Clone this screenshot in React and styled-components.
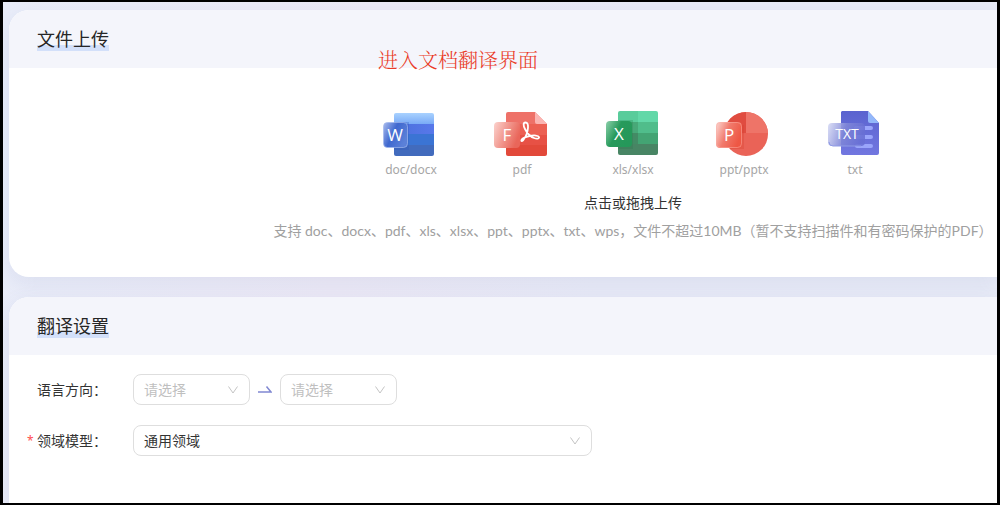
import React, { useState } from "react";
import styled, { createGlobalStyle } from "styled-components";

const FILE_TYPES = [
  { id: "doc", label: "doc/docx" },
  { id: "pdf", label: "pdf" },
  { id: "xls", label: "xls/xlsx" },
  { id: "ppt", label: "ppt/pptx" },
  { id: "txt", label: "txt" },
];

const LANGUAGES = ["中文", "英语", "日语"];
const DOMAINS = ["通用领域", "法律领域", "医学领域"];

const Gradient = ({ id, stops, x2 = "0", y2 = "1" }) => (
  <linearGradient id={id} x1="0" y1="0" x2={x2} y2={y2}>
    {stops.map((color, i) => (
      <stop key={color} offset={i / (stops.length - 1)} stopColor={color} />
    ))}
  </linearGradient>
);

const DocIcon = () => (
  <Icon viewBox="0 0 56 48" aria-hidden="true">
    <defs>
      <Gradient id="docTop" stops={["#a9d2ff", "#79aaf6"]} />
      <Gradient id="docMid" x2="1" y2="0" stops={["#4a6fdb", "#5878ea"]} />
      <Gradient id="docBadge" x2="1" y2="0.5" stops={["#a9bbed", "#3f68cf", "#5b80d8"]} />
      <clipPath id="docClip">
        <rect x="11" y="3" width="40" height="43" rx="2" />
      </clipPath>
    </defs>
    <g clipPath="url(#docClip)">
      <rect x="11" y="3" width="40" height="11" fill="url(#docTop)" />
      <rect x="11" y="14" width="40" height="10" fill="url(#docMid)" />
      <rect x="11" y="24" width="40" height="11" fill="#3b74d4" />
      <rect x="11" y="35" width="40" height="11" fill="#426bbd" />
      <rect x="11" y="12" width="15" height="28" fill="#2e55b8" opacity="0.3" />
    </g>
    <rect x="0.5" y="12.5" width="24" height="25" rx="4" fill="url(#docBadge)" stroke="#9fb6ec" strokeOpacity="0.7" />
    <Letter x="12" y="31">W</Letter>
  </Icon>
);

const PdfIcon = () => (
  <Icon viewBox="0 0 56 48" aria-hidden="true">
    <defs>
      <Gradient id="pdfBadge" x2="1" y2="0.4" stops={["#fbd3ce", "#f29a91", "#e9665a"]} />
      <clipPath id="pdfClip">
        <path d="M14 2h27l12 12v30a2 2 0 0 1-2 2H14a2 2 0 0 1-2-2V4a2 2 0 0 1 2-2z" />
      </clipPath>
    </defs>
    <g clipPath="url(#pdfClip)">
      <rect x="12" y="2" width="41" height="12" fill="#ee7168" />
      <rect x="12" y="14" width="41" height="11" fill="#ec6053" />
      <rect x="12" y="25" width="41" height="10" fill="#e75145" />
      <rect x="12" y="35" width="41" height="11" fill="#e2493a" />
    </g>
    <path d="M41 2l12 12H43a2 2 0 0 1-2-2z" fill="#fbb5b2" />
    <rect x="0" y="12" width="26" height="26" rx="4" fill="url(#pdfBadge)" />
    <Letter x="13" y="31">F</Letter>
    <path
      d="M31.500 12.500c-2.600 0-2.200 3.500-.500 6.500 2 4 5 7.500 9 9 3 1.200 5.500.500 5-1-.500-1.500-5-2-9.500-1-3.500.800-7 2.200-8 4-.700 1.500 1 1.300 2-.200 2.500-3.500 4.200-7.500 4.500-12 .200-3.300-.500-5.300-2.500-5.300z"
      fill="none"
      stroke="#fff"
      strokeWidth="1.800"
      strokeLinejoin="round"
    />
  </Icon>
);

const XlsIcon = () => (
  <Icon viewBox="0 0 56 48" aria-hidden="true">
    <defs>
      <Gradient id="xlsBadge" x2="1" y2="0.5" stops={["#8ccfaa", "#279a5b", "#25985a"]} />
      <clipPath id="xlsClip">
        <rect x="13" y="1" width="40" height="44" rx="2" />
      </clipPath>
    </defs>
    <g clipPath="url(#xlsClip)">
      <rect x="13" y="1" width="20" height="11" fill="#59cc9b" />
      <rect x="33" y="1" width="20" height="11" fill="#62d8a8" />
      <rect x="13" y="12" width="20" height="11" fill="#48a878" />
      <rect x="33" y="12" width="20" height="11" fill="#50bd8b" />
      <rect x="13" y="23" width="20" height="11" fill="#438b65" />
      <rect x="33" y="23" width="20" height="11" fill="#43a473" />
      <rect x="13" y="34" width="40" height="11" fill="#488564" />
      <rect x="13" y="10" width="15" height="29" fill="#227848" opacity="0.25" />
    </g>
    <rect x="1" y="11" width="26" height="26" rx="4" fill="url(#xlsBadge)" />
    <Letter x="14" y="30">X</Letter>
  </Icon>
);

const PptIcon = () => (
  <Icon viewBox="0 0 56 48" aria-hidden="true">
    <defs>
      <Gradient id="pptBadge" x2="1" y2="0.4" stops={["#fcd8d4", "#f17a6c", "#ee5744"]} />
    </defs>
    <circle cx="30" cy="24" r="22" fill="#ea6357" />
    <path d="M30 2a22 22 0 0 0-22 22l22-1z" fill="#e04c40" />
    <path d="M30 2a22 22 0 0 1 22 21H30z" fill="#ee7468" />
    <path d="M10 15h18v24H14a22 22 0 0 1-4-24z" fill="#d8402f" opacity="0.3" />
    <rect x="0" y="12" width="26" height="26" rx="4" fill="url(#pptBadge)" />
    <rect x="0.5" y="12.5" width="25" height="25" rx="4" fill="none" stroke="#fbb0a6" strokeOpacity="0.5" />
    <Letter x="13" y="31">P</Letter>
  </Icon>
);

const TxtIcon = () => (
  <Icon viewBox="0 0 56 48" aria-hidden="true">
    <defs>
      <Gradient id="txtPage" stops={["#5a63cf", "#7277e0"]} />
      <Gradient id="txtBadge" x2="1" y2="0.2" stops={["#d6daf4", "#8087d8", "#686fd4"]} />
    </defs>
    <path d="M15 1h26l11 12v30a2 2 0 0 1-2 2H16a2 2 0 0 1-2-2V2z" fill="url(#txtPage)" />
    <path d="M41 1l11 12h-9a2 2 0 0 1-2-2z" fill="#93b8fa" />
    <path d="M29 18h15M29 27h15M30 36h14" stroke="#9aa5fb" strokeWidth="4" strokeLinecap="round" />
    <rect x="1" y="13" width="37" height="23" rx="4" fill="url(#txtBadge)" fillOpacity="0.88" />
    <path d="M2 32a4 4 0 0 0 4 4h28" fill="none" stroke="#8f9be6" strokeWidth="1" />
    <Letter x="20" y="29" $size={14}>TXT</Letter>
  </Icon>
);

const ICONS = { doc: DocIcon, pdf: PdfIcon, xls: XlsIcon, ppt: PptIcon, txt: TxtIcon };

const SelectBox = ({ id, label, placeholder, options, initial = "", wide }) => {
  const [value, setValue] = useState(initial);
  return (
    <SelectWrap $wide={wide}>
      <Select
        id={id}
        aria-label={label}
        value={value}
        $empty={!value}
        onChange={(e) => setValue(e.target.value)}
      >
        {placeholder && (
          <option value="" disabled>
            {placeholder}
          </option>
        )}
        {options.map((option) => (
          <option key={option} value={option}>
            {option}
          </option>
        ))}
      </Select>
      <Chevron viewBox="0 0 12 12" aria-hidden="true">
        <path d="M1.500 2.500L6 9l4.500-6.500" />
      </Chevron>
    </SelectWrap>
  );
};

const App = () => (
  <>
    <GlobalStyle />
    <Page>
      <Note>进入文档翻译界面</Note>
      <Card>
        <CardHeader>
          <Title>文件上传</Title>
        </CardHeader>
        <DropZone>
          <TypeList>
            {FILE_TYPES.map(({ id, label }) => {
              const TypeIcon = ICONS[id];
              return (
                <TypeItem key={id}>
                  <TypeIcon />
                  <TypeName>{label}</TypeName>
                </TypeItem>
              );
            })}
          </TypeList>
          <UploadButton type="button">点击或拖拽上传</UploadButton>
          <Hint>
            支持 doc、docx、pdf、xls、xlsx、ppt、pptx、txt、wps，文件不超过10MB（暂不支持扫描件和有密码保护的PDF）
          </Hint>
        </DropZone>
      </Card>
      <Card $fill>
        <CardHeader>
          <Title>翻译设置</Title>
        </CardHeader>
        <Form>
          <Row>
            <Label htmlFor="source">语言方向：</Label>
            <SelectBox id="source" placeholder="请选择" options={LANGUAGES} />
            <Arrow viewBox="0 0 14 10" aria-hidden="true">
              <path d="M0 7h13L8.500 1.500" />
            </Arrow>
            <SelectBox id="target" label="目标语言" placeholder="请选择" options={LANGUAGES} />
          </Row>
          <Row>
            <Label htmlFor="domain" $required>
              领域模型：
            </Label>
            <SelectBox id="domain" options={DOMAINS} initial="通用领域" wide />
          </Row>
        </Form>
      </Card>
    </Page>
  </>
);

export default App;

const GlobalStyle = createGlobalStyle`
  * {
    box-sizing: border-box;
  }

  body {
    margin: 0;
    font-family: "Noto Sans", "Noto Sans CJK SC", sans-serif;
    font-size: 14px;
    color: #333;
  }
`;

const Page = styled.main`
  position: relative;
  display: flex;
  flex-direction: column;
  gap: 20px;
  min-height: 100vh;
  padding: 8px 0 0 6px;
  border: solid #000;
  border-width: 2px 3px;
  overflow: hidden;
  background: linear-gradient(100deg, #e9edf9 0%, #ece9f6 35%, #e8eaf7 60%, #e8ebf7 100%);
`;

const Note = styled.p`
  position: absolute;
  top: 43px;
  left: 375px;
  margin: 0;
  font-family: "Noto Serif CJK SC", "Noto Sans CJK SC", serif;
  font-weight: 300;
  font-size: 20px;
  line-height: 30px;
  color: #ea3a26;
`;

const Card = styled.section`
  flex: ${({ $fill }) => ($fill ? "1" : "none")};
  border-radius: ${({ $fill }) => ($fill ? "20px 0 0 0" : "20px 0 0 20px")};
  background: #fff;
  box-shadow: 0 6px 20px rgba(90, 105, 165, 0.1);
`;

const CardHeader = styled.header`
  padding: 17px 28px;
  border-radius: 20px 0 0 0;
  background: #f4f5fb;
`;

const Title = styled.h2`
  display: inline-block;
  vertical-align: top;
  margin: 0;
  font-weight: 400;
  font-size: 18px;
  line-height: 24px;
  color: #262626;
  background: linear-gradient(#d3e0fa, #d3e0fa) bottom / 100% 6px no-repeat;
`;

const DropZone = styled.div`
  display: flex;
  flex-direction: column;
  align-items: center;
  padding: 42px 0 36px 260px;
`;

const TypeList = styled.ul`
  display: flex;
  gap: 55px;
  margin: 0 0 13px;
  padding: 0;
  list-style: none;
`;

const TypeItem = styled.li`
  display: flex;
  flex-direction: column;
  align-items: center;
  gap: 2px;
`;

const Icon = styled.svg`
  display: block;
  width: 56px;
  height: 48px;
`;

const Letter = styled.text`
  font-family: "Open Sans", sans-serif;
  font-size: ${({ $size = 17 }) => $size}px;
  text-anchor: middle;
  fill: #fff;
`;

const TypeName = styled.span`
  font-size: 12px;
  line-height: 20px;
  color: #a6a6a6;
`;

const UploadButton = styled.button`
  padding: 0;
  border: 0;
  background: none;
  font: inherit;
  line-height: 20px;
  color: #333;
  cursor: pointer;
`;

const Hint = styled.p`
  margin: 8px 0 0;
  font-family: Lato, "Noto Sans CJK SC", sans-serif;
  line-height: 20px;
  white-space: nowrap;
  color: #a0a0a0;
`;

const Form = styled.form`
  display: flex;
  flex-direction: column;
  gap: 20px;
  padding: 19px 28px;
`;

const Row = styled.div`
  display: flex;
  align-items: center;
`;

const Label = styled.label`
  position: relative;
  width: 96px;
  line-height: 20px;
  white-space: nowrap;

  &::before {
    content: ${({ $required }) => ($required ? '"*"' : "none")};
    position: absolute;
    left: -10px;
    font-size: 12px;
    color: #ff4d4f;
  }
`;

const SelectWrap = styled.div`
  display: grid;
  align-items: center;
  width: ${({ $wide }) => ($wide ? "459px" : "117px")};
`;

const Select = styled.select`
  grid-area: 1 / 1;
  width: 100%;
  height: 31px;
  padding: 0 28px 0 10px;
  border: 1px solid #dedede;
  border-radius: 8px;
  appearance: none;
  background: #fff;
  font: inherit;
  color: ${({ $empty }) => ($empty ? "#bfbfbf" : "#333")};
`;

const Chevron = styled.svg`
  grid-area: 1 / 1;
  justify-self: end;
  width: 12px;
  height: 12px;
  margin-right: 11px;
  fill: none;
  stroke: #c4c4c4;
  pointer-events: none;
`;

const Arrow = styled.svg`
  width: 14px;
  height: 10px;
  margin: 0 8px;
  fill: none;
  stroke: #8088d2;
  stroke-width: 1.5;
`;
